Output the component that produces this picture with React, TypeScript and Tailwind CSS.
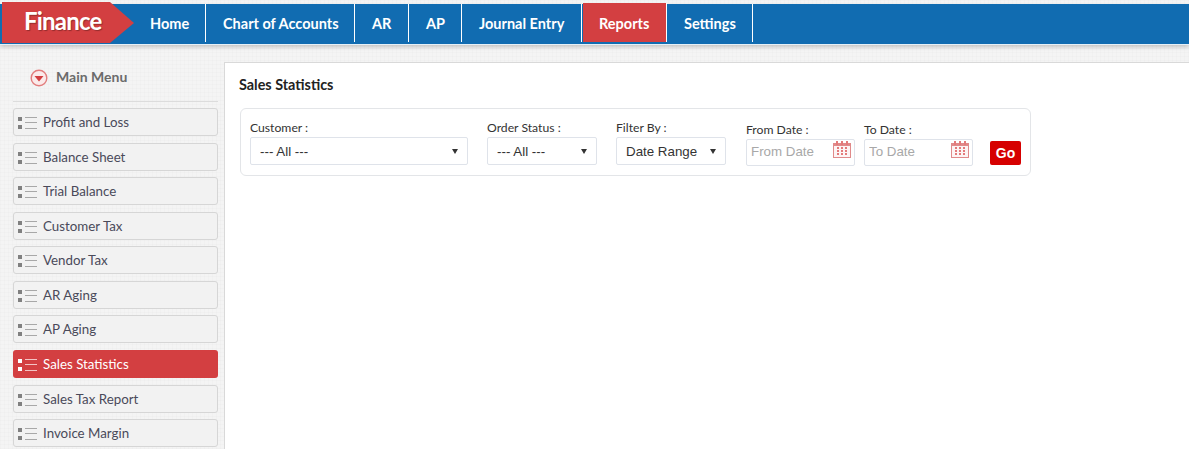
import React from 'react';

const NAV = [
  { label: 'Home', w: 'w-[72px]', pl: 'pl-[16px]' },
  { label: 'Chart of Accounts', w: 'w-[149px]', pl: 'pl-[17px]' },
  { label: 'AR', w: 'w-[54px]', pl: 'pl-[17px]' },
  { label: 'AP', w: 'w-[53px]', pl: 'pl-[17px]' },
  { label: 'Journal Entry', w: 'w-[120px]', pl: 'pl-[17px]' },
];

const MENU = [
  'Profit and Loss',
  'Balance Sheet',
  'Trial Balance',
  'Customer Tax',
  'Vendor Tax',
  'AR Aging',
  'AP Aging',
  'Sales Statistics',
  'Sales Tax Report',
  'Invoice Margin',
];

const ListIcon = ({ active }: { active: boolean }) => (
  <svg width="19" height="14" viewBox="0 0 19 14" className="shrink-0">
    <g fill={active ? '#ffffff' : '#808080'}>
      <rect x="0" y="2" width="4" height="4" />
      <rect x="0" y="10" width="4" height="4" />
    </g>
    <g fill={active ? '#f3c4c4' : '#a8a8a8'}>
      <rect x="7" y="2" width="12" height="1" />
      <rect x="7" y="7" width="12" height="1" />
      <rect x="7" y="13" width="12" height="1" />
    </g>
  </svg>
);

const CalendarIcon = () => (
  <svg width="18" height="17" viewBox="0 0 18 17" className="absolute right-[3px] top-[1px]">
    <rect x="0.5" y="2.5" width="17" height="14" fill="#fdf4f4" stroke="#e08a8a" />
    <rect x="0" y="2" width="18" height="3" fill="#e08a8a" />
    <g fill="#e37a7a">
      <rect x="3" y="0" width="2" height="4" />
      <rect x="8" y="0" width="2" height="4" />
      <rect x="13" y="0" width="2" height="4" />
      <rect x="4" y="6" width="2" height="2" />
      <rect x="8" y="6" width="2" height="2" />
      <rect x="12" y="6" width="2" height="2" />
      <rect x="4" y="9" width="2" height="2" />
      <rect x="8" y="9" width="2" height="2" />
      <rect x="12" y="9" width="2" height="2" />
      <rect x="4" y="12" width="2" height="2" />
      <rect x="8" y="12" width="2" height="2" />
      <rect x="12" y="12" width="2" height="2" />
    </g>
  </svg>
);

const SelectField = ({ label, value, w }: { label: string; value: string; w: string }) => (
  <div className={`flex flex-col ${w} -mt-[1px]`}>
    <label className="text-[12.2px] leading-[15px] mb-[2px] text-[#333]">{label}</label>
    <div className="relative">
      <select
        defaultValue={value}
        className="appearance-none w-full h-[28px] bg-white border border-[#dfe3ea] rounded-[2px] pl-[9px] pt-[2px] text-[13.33px] text-[#333] font-['Liberation_Sans',Arial,sans-serif]"
      >
        <option>{value}</option>
      </select>
      <svg width="6" height="5" viewBox="0 0 6 5" className="absolute right-[10px] top-[12px]">
        <path d="M0 0h6L3 5z" fill="#333" />
      </svg>
    </div>
  </div>
);

const DateField = ({ label }: { label: string }) => (
  <div className="flex flex-col w-[109px] -mt-[1px]">
    <label className="text-[12.2px] leading-[15px] mb-[2px] text-[#333]">{label}</label>
    <div className="relative h-[27px] border border-[#dfe3ea] rounded-[2px] bg-white">
      <input
        placeholder={label.replace(' :', '')}
        className="block w-full h-[23px] pl-[4px] pr-[24px] text-[13.33px] outline-none placeholder:text-[#a8a8a8] font-['Liberation_Sans',Arial,sans-serif]"
      />
      <CalendarIcon />
    </div>
  </div>
);

export default function App() {
  return (
    <div className="h-[449px] w-[1189px] overflow-hidden bg-[#f4f4f4] [background-image:linear-gradient(rgba(0,0,0,0.012)_1px,transparent_1px),linear-gradient(90deg,rgba(0,0,0,0.012)_1px,transparent_1px)] [background-size:4px_4px] flex flex-col font-['Lato','Open_Sans',sans-serif]">
      {/* Top bar */}
      <div className="mt-[4px] h-[41px] shrink-0 bg-[#116cb1] border-b-[1px] border-b-[#e6f0f7] flex shadow-[0_2px_4px_rgba(0,0,0,0.2)] relative z-10">
        <div className="ml-[2px] -mt-[2px] h-[41px] w-[132px] bg-[#d33f41] [clip-path:polygon(0_0,108px_0,132px_21px,108px_100%,0_100%)] shrink-0 pl-[22px] text-white text-[24px] tracking-[-0.8px] font-bold leading-[37px] [text-shadow:1px_1px_1px_rgba(0,0,0,0.3)]">
          Finance
        </div>
        <nav className="flex h-[38px]">
          {NAV.map(item => (
            <div
              key={item.label}
              className={`${item.w} ${item.pl} border-r border-r-white text-white text-[14.5px] font-bold leading-[40px] whitespace-nowrap`}
            >
              {item.label}
            </div>
          ))}
          <div className="w-[84px] h-[39px] -mt-[1px] ml-[1px] bg-[#d33f41] border-r border-r-white pl-[16px] text-white text-[14.5px] font-bold leading-[42px]">
            Reports
          </div>
          <div className="w-[86px] pl-[17px] border-r border-r-white text-white text-[14.5px] font-bold leading-[40px]">
            Settings
          </div>
        </nav>
      </div>

      <div className="flex flex-1 min-h-0">
        {/* Sidebar */}
        <aside className="w-[224px] shrink-0 pl-[13px] pr-[6px]">
          <div className="h-[56px] mt-[1px] border-b border-b-[#dcdcdc] flex items-center pl-[17px] gap-[8px] pt-[6px]">
            <svg width="18" height="18" viewBox="0 0 18 18" className="mt-[3px]">
              <circle cx="9" cy="9" r="7.8" fill="#fbeaea" stroke="#e27d7d" strokeWidth="1.4" />
              <path d="M4.5 7h9L9 12.5z" fill="#d33f41" />
            </svg>
            <span className="text-[14px] font-bold text-[#6b6b6b]">Main Menu</span>
          </div>
          <ul className="mt-[6px] flex flex-col gap-[6.57px]">
            {MENU.map(item => {
              const active = item === 'Sales Statistics';
              return (
                <li
                  key={item}
                  className={
                    active
                      ? 'h-[28px] rounded-[3px] bg-[#d33f41] flex items-center pl-[5px] gap-[6px] text-[13.33px] text-white'
                      : 'h-[28px] rounded-[3px] bg-[#f2f2f2] border border-[#d6d6d6] flex items-center pl-[4px] gap-[6px] text-[13.33px] text-[#4a4a5a]'
                  }
                >
                  <ListIcon active={active} />
                  <span className="pt-[2px]">{item}</span>
                </li>
              );
            })}
          </ul>
        </aside>

        {/* Content */}
        <main className="flex-1 mt-[17px] bg-white border-t border-l border-[#d9d9d9] pl-[14px] pt-[14px]">
          <h1 className="text-[14.4px] font-bold text-[#222] leading-[16px]">Sales Statistics</h1>
          <div className="ml-[1px] mt-[15px] w-[791px] h-[68px] border border-[#e3e5e8] rounded-[6px] pl-[9px] flex items-start pt-[12px]">
            <SelectField label="Customer :" value="--- All ---" w="w-[218px]" />
            <div className="w-[19px]" />
            <SelectField label="Order Status :" value="--- All ---" w="w-[110px]" />
            <div className="w-[19px]" />
            <SelectField label="Filter By :" value="Date Range" w="w-[110px]" />
            <div className="w-[20px]" />
            <div className="mt-[2px]"><DateField label="From Date :" /></div>
            <div className="w-[9px]" />
            <div className="mt-[2px]"><DateField label="To Date :" /></div>
            <button className="ml-[17px] mt-[20px] w-[31px] h-[24px] bg-[#d60000] rounded-[2px] text-white text-[14px] font-bold font-['Liberation_Sans',Arial,sans-serif]">
              Go
            </button>
          </div>
        </main>
      </div>
    </div>
  );
}
